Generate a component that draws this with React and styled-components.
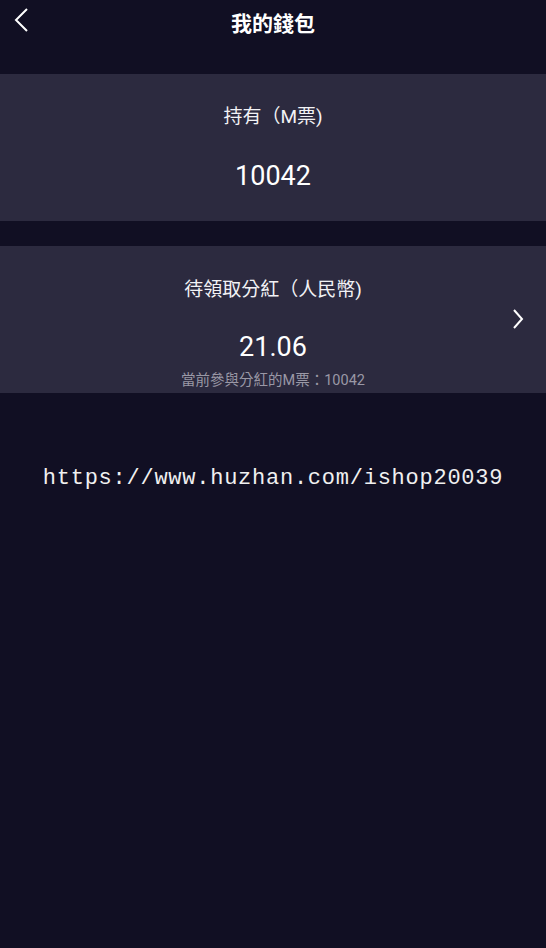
import React from "react";
import styled, { createGlobalStyle } from "styled-components";

const GlobalStyle = createGlobalStyle`
  html, body {
    margin: 0;
    padding: 0;
    background: #110f23;
  }
  body {
    font-family: Roboto, "Noto Sans CJK TC", sans-serif;
    color: #fff;
  }
`;

const Page = styled.div`
  width: 546px;
  min-height: 948px;
  background: #110f23;
  display: flex;
  flex-direction: column;
`;

const Header = styled.div`
  position: relative;
  height: 44px;
  display: flex;
  align-items: center;
  justify-content: center;
  margin-bottom: 30px;
`;

const BackButton = styled.div`
  position: absolute;
  left: 10px;
  top: 6px;
  width: 22px;
  height: 28px;
  display: flex;
  align-items: center;
  justify-content: center;
`;

const Title = styled.div`
  font-family: "Noto Sans CJK TC", sans-serif;
  font-size: 21px;
  font-weight: 700;
  line-height: 44px;
`;

const Cards = styled.div`
  display: flex;
  flex-direction: column;
  gap: 25px;
`;

const Card = styled.div`
  position: relative;
  height: 147px;
  background: #2c2a3f;
  display: flex;
  flex-direction: column;
  align-items: center;
  box-sizing: border-box;
  padding-top: ${(props) => props.top}px;
`;

const Label = styled.div`
  font-size: 19px;
  line-height: 26px;
  color: #f2f2f5;
`;

const Amount = styled.div`
  font-family: Roboto, sans-serif;
  font-size: 27px;
  line-height: 36px;
  margin-top: ${(props) => props.gap}px;
`;

const Note = styled.div`
  font-size: 14.5px;
  line-height: 18px;
  color: #9a98a6;
  margin-top: 7px;
`;

const Arrow = styled.div`
  position: absolute;
  right: 20px;
  top: 60px;
  display: flex;
`;

const Link = styled.div`
  margin-top: 71px;
  text-align: center;
  font-family: "Liberation Mono", monospace;
  font-size: 22px;
  letter-spacing: 0.75px;
  line-height: 30px;
  color: #f0f0f0;
`;

const Chevron = ({ dir }) => (
  <svg width="16" height="26" viewBox="0 0 16 26">
    <path
      d={dir === "left" ? "M14 2 L3 13 L14 24" : "M4 4 L12 13 L4 22"}
      fill="none"
      stroke="#fff"
      strokeWidth="2"
    />
  </svg>
);

export default function App() {
  return (
    <Page>
      <GlobalStyle />
      <Header>
        <BackButton>
          <Chevron dir="left" />
        </BackButton>
        <Title>我的錢包</Title>
      </Header>

      <Cards>
        <Card top={30}>
          <Label>持有（M票)</Label>
          <Amount gap={28}>10042</Amount>
        </Card>

        <Card top={31}>
          <Label>待領取分紅（人民幣)</Label>
          <Amount gap={26}>21.06</Amount>
          <Note>當前參與分紅的M票：10042</Note>
          <Arrow>
            <Chevron dir="right" />
          </Arrow>
        </Card>
      </Cards>

      <Link>https://www.huzhan.com/ishop20039</Link>
    </Page>
  );
}
